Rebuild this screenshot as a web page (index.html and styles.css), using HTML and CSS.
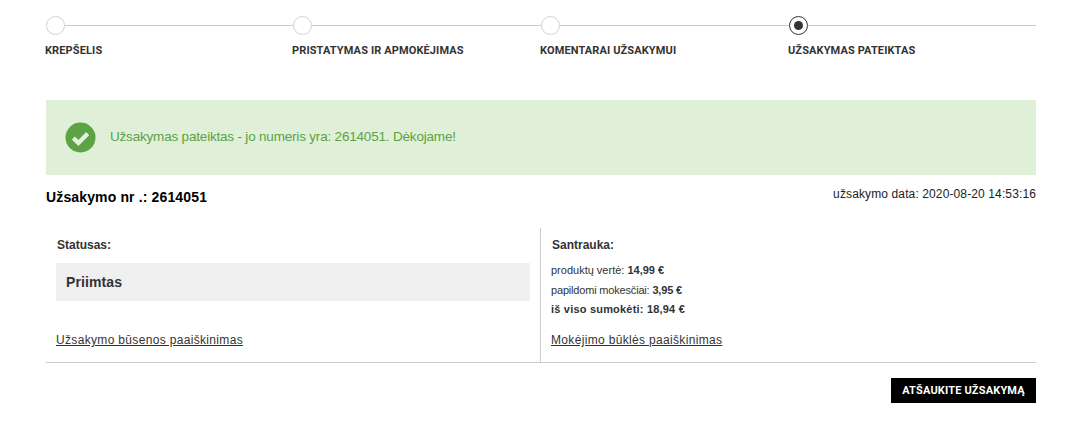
FILE: index.html
```html
<!DOCTYPE html>
<html lang="lt">
<head>
<meta charset="utf-8">
<title>Užsakymas pateiktas</title>
<link rel="stylesheet" href="styles.css">
</head>
<body>
<main class="page">
  <ol class="steps">
    <li class="step"><div class="track"><span class="dot"></span><span class="line"></span></div><span class="step-label">KREPŠELIS</span></li>
    <li class="step"><div class="track"><span class="dot"></span><span class="line"></span></div><span class="step-label">PRISTATYMAS IR APMOKĖJIMAS</span></li>
    <li class="step"><div class="track"><span class="dot"></span><span class="line"></span></div><span class="step-label">KOMENTARAI UŽSAKYMUI</span></li>
    <li class="step"><div class="track"><span class="dot dot-active"></span><span class="line"></span></div><span class="step-label">UŽSAKYMAS PATEIKTAS</span></li>
  </ol>
  <div class="notice">
    <svg class="notice-icon" viewBox="0 0 32 32" width="31" height="31" aria-hidden="true"><circle cx="16" cy="16" r="15.5" fill="#5ba344"/><path d="M8.6 16.4l5.2 5.2 9.6-9.6" fill="none" stroke="#e4f1de" stroke-width="4.4"/></svg>
    <span class="notice-text">Užsakymas pateiktas - jo numeris yra: 2614051. Dėkojame!</span>
  </div>
  <div class="order-head">
    <h1 class="order-no">Užsakymo nr .: 2614051</h1>
    <span class="order-date">užsakymo data: 2020-08-20 14:53:16</span>
  </div>
  <div class="details">
    <section class="col col-left">
      <h2 class="col-title">Statusas:</h2>
      <div class="status">Priimtas</div>
      <a class="col-link" href="#">Užsakymo būsenos paaiškinimas</a>
    </section>
    <section class="col col-right">
      <h2 class="col-title">Santrauka:</h2>
      <ul class="summary">
        <li>produktų vertė: <b>14,99 €</b></li>
        <li class="summary-fees">papildomi mokesčiai: <b>3,95 €</b></li>
        <li class="summary-total">iš viso sumokėti: 18,94 €</li>
      </ul>
      <a class="col-link" href="#">Mokėjimo būklės paaiškinimas</a>
    </section>
  </div>
  <div class="actions"><button class="cancel" type="button">ATŠAUKITE UŽSAKYMĄ</button></div>
</main>
</body>
</html>
```

FILE: styles.css
```css
* { box-sizing: border-box; }
html, body { margin: 0; background: #fff; }
body { font-family: "Liberation Sans", Arial, sans-serif; color: #333; }
.page { width: 1080px; padding: 15px 44px 0 46px; }

.steps { display: grid; grid-template-columns: 247px 248px 248px 247px; list-style: none; margin: 0; padding: 0; }
.track { display: flex; align-items: center; height: 20px; }
.dot { flex: none; width: 19px; height: 19px; border: 1.5px solid #d2d2d2; border-radius: 50%; background: #fff; display: flex; align-items: center; justify-content: center; }
.dot-active { border-color: #333; }
.dot-active::after { content: ""; width: 9px; height: 9px; border-radius: 50%; background: #333; }
.line { flex: 1; height: 1px; background: #ccc; }
.step-label { display: block; margin-top: 9px; margin-left: -1px; font: 700 11px/13px Roboto, sans-serif; letter-spacing: .12px; color: #333; }

.notice { display: flex; align-items: center; gap: 14px; height: 75px; margin-top: 43px; padding-left: 19px; background: #dfefd8; color: #5ba344; font-size: 13.5px; letter-spacing: -.19px; }
.notice-icon { flex: none; }
.notice-text { line-height: 16px; padding-bottom: 2px; }

.order-head { display: flex; justify-content: space-between; height: 53px; padding-top: 13px; }
.order-no { margin: 0; font-size: 14px; line-height: 18px; font-weight: 700; letter-spacing: .14px; color: #000; }
.order-date { font-size: 12px; line-height: 12px; letter-spacing: .12px; color: #222; }

.details { display: flex; height: 135px; border-bottom: 1px solid #ccc; }
.col { flex: 1 1 50%; position: relative; display: flex; flex-direction: column; padding: 10px 0 0 10px; }
.col-left { border-right: 1px solid #ccc; padding-right: 10px; flex: 0 0 495px; }
.col-title { margin: 0 0 0 1px; font-size: 12px; line-height: 14px; font-weight: 700; color: #333; }
.status { margin-top: 11px; height: 38px; padding-left: 10px; background: #f0f0f0; font-size: 14px; font-weight: 700; line-height: 38px; letter-spacing: .1px; color: #333; }
.summary { list-style: none; margin: 9px 0 0; padding: 0; font-size: 11px; line-height: 19.5px; }
.summary-fees { letter-spacing: -.18px; }
.summary-total { font-weight: 700; letter-spacing: .2px; }
.col-link { position: absolute; left: 10px; bottom: 15px; font-size: 12px; line-height: 14px; letter-spacing: .33px; color: #333; }

.actions { display: flex; justify-content: flex-end; padding-top: 15px; }
.cancel { width: 145px; height: 25px; padding: 0; border: 0; background: #000; color: #fff; font: 700 11px/25px Roboto, sans-serif; letter-spacing: .17px; }
```
